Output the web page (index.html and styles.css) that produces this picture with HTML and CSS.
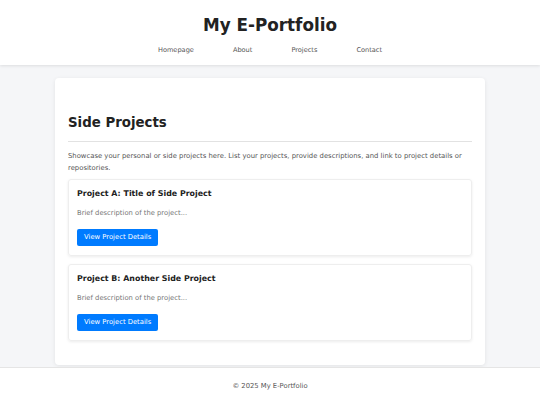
FILE: index.html
```html
<!DOCTYPE html>
<html lang="en">
<head>
    <meta charset="UTF-8">
    <meta name="viewport" content="width=device-width, initial-scale=1.0">
    <title>My E-Portfolio - Side Projects</title>
    <link rel="stylesheet" href="styles.css">
</head>
<body>

    <!-- Cabecera -->
    <header class="site-header">
        <h1>My E-Portfolio</h1>
        <nav class="main-nav">
            <a href="#">Homepage</a>
            <a href="#">About</a>
            <a href="#">Projects</a>
            <a href="#">Contact</a>
        </nav>
    </header>

    <main class="container">
        <h2>Side Projects</h2>
        <p class="intro">Showcase your personal or side projects here. List your projects, provide descriptions, and link to project details or repositories.</p>

        <div class="project-card">
            <h3>Project A: Title of Side Project</h3>
            <p>Brief description of the project...</p>
            <a href="#" class="btn">View Project Details</a>
        </div>

        <div class="project-card">
            <h3>Project B: Another Side Project</h3>
            <p>Brief description of the project...</p>
            <a href="#" class="btn">View Project Details</a>
        </div>
    </main>

    <footer class="site-footer">
        <p>&copy; 2025 My E-Portfolio</p>
    </footer>

</body>
</html>
```

FILE: styles.css
```css
body {
    font-family: 'DejaVu Sans', sans-serif;
    background: #f5f6f8;
    margin: 0;
    padding: 0;
    color: #333;
}

/* Cabecera */
.site-header {
    background: #fff;
    text-align: center;
    padding: 14px 0 10px;
    box-shadow: 0 1px 3px rgba(0, 0, 0, 0.1);
}
.site-header h1 {
    margin: 0 0 10px;
    font-size: 16.8px;
    line-height: 22px;
    color: #222;
}
.main-nav {
    display: flex;
    justify-content: center;
    gap: 39px;
}
.main-nav a {
    color: #555;
    text-decoration: none;
    font-size: 6.6px;
    line-height: 9px;
}

.container {
    width: 404px;
    margin: 13px auto 2px;
    padding: 37px 13px 24px;
    background: #fff;
    border-radius: 4px;
    box-shadow: 0 1px 4px rgba(0, 0, 0, 0.08);
}
.container h2 {
    margin: 0 0 8px;
    font-size: 13.35px;
    line-height: 16px;
    padding-bottom: 10px;
    border-bottom: 1px solid #e2e2e2;
    color: #222;
}
.intro {
    font-size: 6.85px;
    line-height: 12px;
    color: #555;
    margin: 0 0 5px;
}

.project-card {
    border: 1px solid #eee;
    border-radius: 3px;
    box-shadow: 0 1px 3px rgba(0, 0, 0, 0.08);
    padding: 8px 8px 7px;
    margin-bottom: 8px;
}
.project-card:last-child {
    margin-bottom: 0;
}
.project-card h3 {
    margin: 0 0 8px;
    font-size: 7.9px;
    line-height: 12px;
    color: #222;
}
.project-card p {
    margin: 0 0 10px;
    font-size: 6.8px;
    line-height: 11px;
    color: #777;
}
.btn {
    display: inline-block;
    vertical-align: top;
    background-color: #007bff;
    color: #fff;
    font-size: 6.8px;
    line-height: 17px;
    padding: 0 7px;
    border-radius: 2px;
    text-decoration: none;
}

.site-footer {
    background: #fff;
    border-top: 1px solid #e5e5e5;
    text-align: center;
    padding: 13px 0 16px;
}
.site-footer p {
    margin: 0;
    font-size: 6.8px;
    line-height: 10px;
    color: #555;
}
```
